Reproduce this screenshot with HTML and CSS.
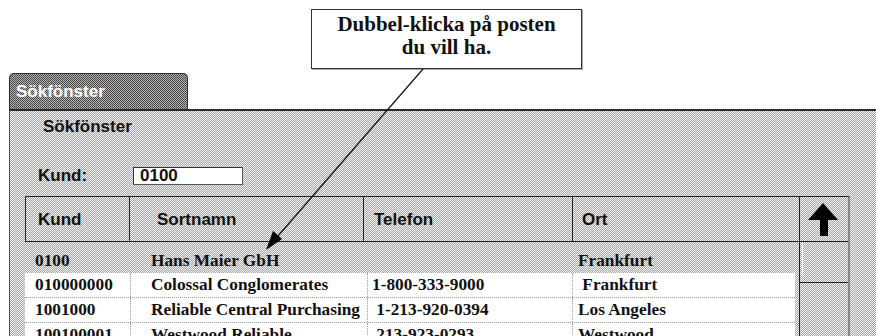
FILE: index.html
```html
<!DOCTYPE html>
<html lang="sv">
<head>
  <meta charset="UTF-8">
  <meta name="viewport" content="width=device-width, initial-scale=1.0">
  <title>Sökfönster</title>
  <link rel="stylesheet" href="styles.css">
</head>
<body>

<div class="top">
  <div class="callout">Dubbel-klicka på posten<br>du vill ha.</div>
</div>

<div class="tab">Sökfönster</div>

<div class="panel">
  <h2 class="panel-title">Sökfönster</h2>

  <div class="field">
    <span class="field-label">Kund:</span>
    <div class="field-input">0100</div>
  </div>

  <div class="list">
    <div class="list-main">
      <div class="list-head">
        <div class="head-cell c-kund">Kund</div>
        <div class="head-cell c-namn">Sortnamn</div>
        <div class="head-cell c-tel">Telefon</div>
        <div class="head-cell c-ort">Ort</div>
      </div>
      <div class="rows">
        <div class="row current">
          <div class="cell">0100</div>
          <div class="cell">Hans Maier GbH</div>
          <div class="cell"></div>
          <div class="cell">Frankfurt</div>
        </div>
        <div class="row">
          <div class="cell">010000000</div>
          <div class="cell">Colossal Conglomerates</div>
          <div class="cell">1-800-333-9000</div>
          <div class="cell">&nbsp;Frankfurt</div>
        </div>
        <div class="row">
          <div class="cell">1001000</div>
          <div class="cell">Reliable Central Purchasing</div>
          <div class="cell">&nbsp;1-213-920-0394</div>
          <div class="cell">Los Angeles</div>
        </div>
        <div class="row">
          <div class="cell">100100001</div>
          <div class="cell">Westwood Reliable</div>
          <div class="cell">&nbsp;213-923-0293</div>
          <div class="cell">Westwood</div>
        </div>
      </div>
    </div>
    <div class="scroll">
      <div class="scroll-up">
        <svg width="30" height="33" viewBox="0 0 30 33">
          <polygon points="15,0 30,17 20,17 20,33 12,33 12,17 0,17" fill="#000"/>
        </svg>
      </div>
      <div class="scroll-thumb"><div class="thumb-edge"></div></div>
    </div>
  </div>
</div>

<!-- pekpil från pratbubblan till posten -->
<svg class="pointer" width="876" height="336" viewBox="0 0 876 336">
  <line x1="423" y1="69" x2="278" y2="236" stroke="#111" stroke-width="1.2"/>
  <polygon points="266,250 282,239 273,231" fill="#000"/>
</svg>

</body>
</html>
```

FILE: styles.css
```css
html, body {
  height: 336px;
  overflow: hidden;
}
body {
  margin: 0;
  background-color: #fff;
  font-family: "Liberation Sans", Arial, sans-serif;
  color: #111;
  position: relative;
}

/* pratbubbla */
.top {
  height: 73px;
  padding-top: 9px;
  box-sizing: border-box;
}
.callout {
  margin-left: 311px;
  width: 271px;
  height: 60px;
  box-sizing: border-box;
  border: 1px solid #333;
  box-shadow: 1px 1px 0 #aaa;
  padding-top: 3px;
  font-family: "Liberation Serif", "Times New Roman", serif;
  font-weight: bold;
  font-size: 21px;
  line-height: 23px;
  text-align: center;
}

/* flik */
.tab {
  margin-left: 9px;
  width: 179px;
  height: 36px;
  box-sizing: border-box;
  border: 1px solid #333;
  border-bottom: none;
  border-radius: 5px 5px 0 0;
  background-color: #7e7e7e;
  background-image: url("data:image/svg+xml,%3Csvg xmlns='http://www.w3.org/2000/svg' width='2' height='2' shape-rendering='crispEdges'%3E%3Crect width='2' height='2' fill='%23b4b4b4'/%3E%3Crect width='1' height='1' fill='%23474747'/%3E%3Crect x='1' y='1' width='1' height='1' fill='%23474747'/%3E%3C/svg%3E");
  background-size: 2px 2px;
  padding-left: 6px;
  color: #fff;
  font-weight: bold;
  font-size: 17px;
  line-height: 35px;
}

.panel {
  margin-left: 9px;
  border-top: 2px solid #2a2a2a;
  border-left: 1px solid #555;
  background-color: #cecece;
  background-image: url("data:image/svg+xml,%3Csvg xmlns='http://www.w3.org/2000/svg' width='2' height='2' shape-rendering='crispEdges'%3E%3Crect width='2' height='2' fill='%23f4f4f4'/%3E%3Crect width='1' height='1' fill='%23a4a4a4'/%3E%3Crect x='1' y='1' width='1' height='1' fill='%23a4a4a4'/%3E%3C/svg%3E");
  background-size: 2px 2px;
  padding-top: 6px;
  height: 400px;
}
.panel-title {
  margin: 0 0 0 33px;
  font-size: 17px;
  line-height: 20px;
  font-weight: bold;
}

.field {
  display: flex;
  align-items: center;
  margin: 30px 0 0 28px;
  height: 18px;
}
.field-label {
  width: 95px;
  font-weight: bold;
  font-size: 17px;
  line-height: 18px;
}
.field-input {
  width: 110px;
  height: 18px;
  box-sizing: border-box;
  background-color: #fff;
  border: 1px solid #555;
  border-top-color: #333;
  border-left-color: #333;
  padding-left: 6px;
  font-weight: bold;
  font-size: 17px;
  line-height: 16px;
}

/* lista */
.list {
  display: flex;
  margin: 11px 0 0 15px;
}
.list-main {
  width: 774px;
}
.list-head {
  display: flex;
  border-top: 1px solid #222;
  border-left: 1px solid #222;
  border-bottom: 1px solid #222;
}
.head-cell {
  height: 44px;
  box-sizing: border-box;
  border-right: 1px solid #222;
  display: flex;
  align-items: center;
  font-weight: bold;
  font-size: 17px;
  line-height: 18px;
  padding-top: 1px;
}
.head-cell.c-kund { width: 104px; padding-left: 12px; }
.head-cell.c-namn { width: 234px; padding-left: 27px; }
.head-cell.c-tel { width: 209px; padding-left: 10px; }
.head-cell.c-ort { width: 226px; padding-left: 9px; border-right: none; }

.rows {
  padding-top: 7px;
  width: 770px;
}
.row {
  display: grid;
  grid-template-columns: 105px 237px 205px 223px;
  height: 25px;
  box-sizing: border-box;
  background-color: #fff;
  border-bottom: 1px dotted #999;
  font-family: "Liberation Serif", "Times New Roman", serif;
  font-weight: bold;
  font-size: 17.3px;
  line-height: 24px;
  white-space: nowrap;
}
.row.current {
  background: none;
  border-bottom: none;
  height: 24px;
}
.cell {
  overflow: hidden;
}
.row .cell:nth-child(1) { padding-left: 10px; }
.row .cell:nth-child(2) { padding-left: 20px; border-left: 1px dotted #999; }
.row .cell:nth-child(3) { padding-left: 4px; border-left: 1px dotted #999; }
.row .cell:nth-child(4) { padding-left: 5px; border-left: 1px dotted #999; }
.row.current .cell { border-left-color: transparent; }

/* rullningslist */
.scroll {
  width: 51px;
  box-sizing: border-box;
  border-top: 1px solid #222;
  border-left: 1px solid #222;
  border-right: 2px solid #888;
}
.scroll-up {
  height: 44px;
  border-bottom: 1px solid #222;
  display: flex;
  align-items: center;
  justify-content: center;
  padding-right: 2px;
}
.scroll-thumb {
  height: 40px;
  border-bottom: 1px solid #222;
}
.thumb-edge {
  margin-left: 2px;
  height: 34px;
  border-left: 1px dotted #fff;
}

.pointer {
  position: absolute;
  top: 0;
  left: 0;
  pointer-events: none;
}
```
